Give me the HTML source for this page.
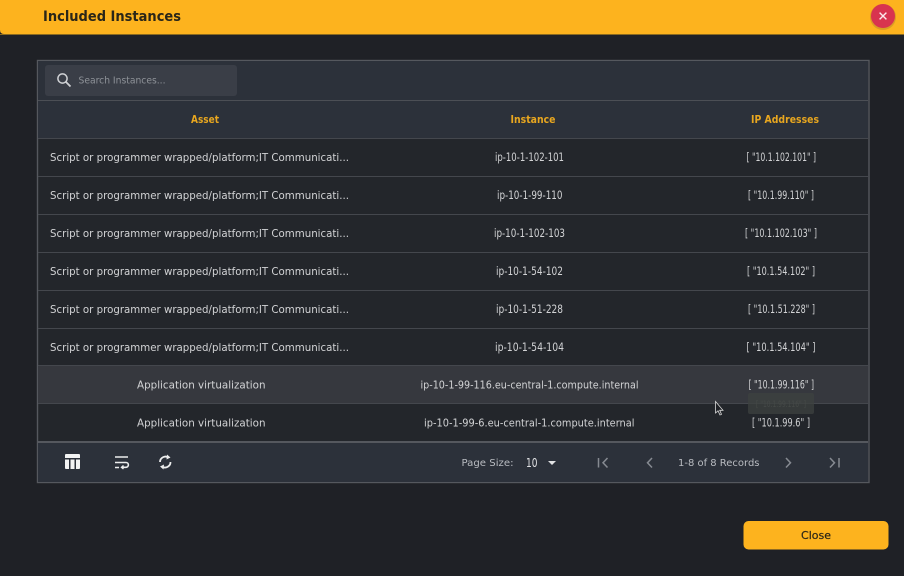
<!DOCTYPE html>
<html><head><meta charset="utf-8"><style>
html,body{margin:0;padding:0;width:904px;height:576px;overflow:hidden;background:#1f2126}
svg{display:block;filter:blur(.35px)}
text{font-family:"DejaVu Sans","Liberation Sans",sans-serif}
.r{font-size:10.5px;fill:#d2d3d5}
.n{font-size:11.5px;fill:#d2d3d5}
.h{font-size:10.5px;font-weight:700;fill:#e9a71f}
.f{font-size:10px;fill:#b9bcc1}
</style></head><body>
<svg width="904" height="576" viewBox="0 0 904 576" xmlns="http://www.w3.org/2000/svg">
<rect width="904" height="576" fill="#1f2126"/>
<path d="M0 0H904V34H4Q0 34 0 30Z" fill="#fdb31e"/>
<rect x="0" y="34" width="904" height="1" fill="#8a6a20"/>
<text x="43" y="21" font-size="14" font-weight="700" fill="#2a2618" textLength="138" lengthAdjust="spacingAndGlyphs">Included Instances</text>
<circle cx="883" cy="17" r="13" fill="#b8882a" opacity=".5"/>
<circle cx="883" cy="16" r="12" fill="#d8344f"/>
<path d="M879.6 12.6L886.4 19.4M886.4 12.6L879.6 19.4" stroke="#fbe9ec" stroke-width="1.4"/>

<rect x="37.5" y="60.5" width="831.500" height="422" fill="#23262b" stroke="#55585e" stroke-width="1.400"/>
<rect x="38" y="61" width="830" height="77" fill="#2c313a"/>
<rect x="45" y="65" width="192" height="31" rx="3" fill="#3a3e47"/>
<circle cx="62.5" cy="78.500" r="4.600" fill="none" stroke="#d0d2d5" stroke-width="1.500"/>
<path d="M66 82L70.500 86.500" stroke="#d0d2d5" stroke-width="1.800"/>
<text x="78.500" y="83.500" font-size="10" fill="#8f9399" textLength="87" lengthAdjust="spacingAndGlyphs">Search Instances...</text>
<rect x="38" y="100" width="830" height="1" fill="#4c4f55"/>
<text class="h" x="191" y="123" textLength="28" lengthAdjust="spacingAndGlyphs">Asset</text>
<text class="h" x="510.500" y="123" textLength="45" lengthAdjust="spacingAndGlyphs">Instance</text>
<text class="h" x="751" y="123" textLength="68" lengthAdjust="spacingAndGlyphs">IP Addresses</text>

<rect x="38" y="366" width="830" height="38" fill="#36383e"/>
<g fill="#44474d">
<rect x="38" y="138" width="830" height="1"/><rect x="38" y="176" width="830" height="1"/>
<rect x="38" y="214" width="830" height="1"/><rect x="38" y="252" width="830" height="1"/>
<rect x="38" y="290" width="830" height="1"/><rect x="38" y="328" width="830" height="1"/>
<rect x="38" y="365" width="830" height="1"/><rect x="38" y="403" width="830" height="1"/>
</g>
<rect x="38" y="441" width="830" height="2" fill="#55585e"/>

<g class="rows">
<text class="r" x="50" y="161" textLength="299" lengthAdjust="spacingAndGlyphs">Script or programmer wrapped/platform;IT Communicati...</text>
<text class="r" x="50" y="199" textLength="299" lengthAdjust="spacingAndGlyphs">Script or programmer wrapped/platform;IT Communicati...</text>
<text class="r" x="50" y="237" textLength="299" lengthAdjust="spacingAndGlyphs">Script or programmer wrapped/platform;IT Communicati...</text>
<text class="r" x="50" y="275" textLength="299" lengthAdjust="spacingAndGlyphs">Script or programmer wrapped/platform;IT Communicati...</text>
<text class="r" x="50" y="313" textLength="299" lengthAdjust="spacingAndGlyphs">Script or programmer wrapped/platform;IT Communicati...</text>
<text class="r" x="50" y="351" textLength="299" lengthAdjust="spacingAndGlyphs">Script or programmer wrapped/platform;IT Communicati...</text>
<text class="r" x="137" y="388.500" textLength="128.500" lengthAdjust="spacingAndGlyphs">Application virtualization</text>
<text class="r" x="137" y="426.500" textLength="128.500" lengthAdjust="spacingAndGlyphs">Application virtualization</text>

<text class="n" x="495" y="161" textLength="69" lengthAdjust="spacingAndGlyphs">ip-10-1-102-101</text>
<text class="n" x="497" y="199" textLength="65.500" lengthAdjust="spacingAndGlyphs">ip-10-1-99-110</text>
<text class="n" x="494" y="237" textLength="71" lengthAdjust="spacingAndGlyphs">ip-10-1-102-103</text>
<text class="n" x="496" y="275" textLength="67" lengthAdjust="spacingAndGlyphs">ip-10-1-54-102</text>
<text class="n" x="496" y="313" textLength="67" lengthAdjust="spacingAndGlyphs">ip-10-1-51-228</text>
<text class="n" x="495" y="351" textLength="69" lengthAdjust="spacingAndGlyphs">ip-10-1-54-104</text>
<text class="r" x="420.500" y="388.500" textLength="218" lengthAdjust="spacingAndGlyphs">ip-10-1-99-116.eu-central-1.compute.internal</text>
<text class="r" x="424" y="426.500" textLength="210.500" lengthAdjust="spacingAndGlyphs">ip-10-1-99-6.eu-central-1.compute.internal</text>

<text class="n" x="746.500" y="161" textLength="69.500" lengthAdjust="spacingAndGlyphs">[ "10.1.102.101" ]</text>
<text class="n" x="748" y="199" textLength="66" lengthAdjust="spacingAndGlyphs">[ "10.1.99.110" ]</text>
<text class="n" x="745" y="237" textLength="72" lengthAdjust="spacingAndGlyphs">[ "10.1.102.103" ]</text>
<text class="n" x="747" y="275" textLength="68" lengthAdjust="spacingAndGlyphs">[ "10.1.54.102" ]</text>
<text class="n" x="748" y="313" textLength="67" lengthAdjust="spacingAndGlyphs">[ "10.1.51.228" ]</text>
<text class="n" x="746.500" y="351" textLength="69" lengthAdjust="spacingAndGlyphs">[ "10.1.54.104" ]</text>
<text class="n" x="748.500" y="388.500" textLength="65.500" lengthAdjust="spacingAndGlyphs">[ "10.1.99.116" ]</text>
<text class="n" x="752" y="426.500" textLength="58" lengthAdjust="spacingAndGlyphs">[ "10.1.99.6" ]</text>
</g>

<rect x="748" y="393" width="66" height="21" rx="2" fill="#3d4240" opacity=".75"/>
<text x="756" y="407" font-size="9" fill="#464a48" textLength="50" lengthAdjust="spacingAndGlyphs">[ "10.1.99.116" ]</text>
<path d="M715.500 401.500V413L718 410.800L720 415L721.500 414.300L719.700 410.300H723Z" fill="#1f2126" stroke="#d8d8d8" stroke-width=".8"/>

<rect x="38" y="443" width="830" height="39" fill="#2c313a"/>
<path d="M65 455a1 1 0 0 1 1-1h13a1 1 0 0 1 1 1v3h-15z" fill="#f3f3f3"/>
<path d="M65 459.500h4v9.500h-3a1 1 0 0 1-1-1zM70.500 459.500h4v9.500h-4zM76 459.500h4v8.500a1 1 0 0 1-1 1h-3z" fill="#f3f3f3"/>
<path d="M115 457H128M115 462.500H126a2.400 2.400 0 0 1 0 4.800H122M115 467.500H119" fill="none" stroke="#eceded" stroke-width="1.600"/>
<path d="M123.500 465.500L121.500 467.300L123.500 469" fill="none" stroke="#eceded" stroke-width="1.400"/>
<path d="M160 462a5.500 5.500 0 0 1 8.500-4.500M170.500 462a5.500 5.500 0 0 1-8.500 4.600" fill="none" stroke="#eceded" stroke-width="1.800"/>
<path d="M167 454.500L170.500 457.500L166.500 459.500ZM163.500 469.500L160 466.500L164 464.500Z" fill="#eceded"/>

<text class="f" x="461.500" y="466" textLength="52" lengthAdjust="spacingAndGlyphs">Page Size:</text>
<text x="526" y="467" font-size="12" fill="#e1e2e4" textLength="11.500" lengthAdjust="spacingAndGlyphs">10</text>
<path d="M548 461H556L552 465Z" fill="#e1e2e4"/>
<path d="M598.500 458V467.500" stroke="#868a91" stroke-width="1.500"/>
<path d="M607.500 458L603 462.800L607.500 467.500" fill="none" stroke="#868a91" stroke-width="1.500"/>
<path d="M652 458L647.500 462.800L652 467.500" fill="none" stroke="#868a91" stroke-width="1.500"/>
<text class="f" x="678" y="466" textLength="81.500" lengthAdjust="spacingAndGlyphs">1-8 of 8 Records</text>
<path d="M786 458L790.500 462.800L786 467.500" fill="none" stroke="#868a91" stroke-width="1.500"/>
<path d="M830 458L834.500 462.800L830 467.500" fill="none" stroke="#868a91" stroke-width="1.500"/>
<path d="M839 458V467.500" stroke="#868a91" stroke-width="1.500"/>

<rect x="743.500" y="521" width="145" height="28.500" rx="5" fill="#fdb31e"/>
<text x="801" y="539" font-size="11" font-weight="400" fill="#2a2618" stroke="#2a2618" stroke-width=".2" textLength="30" lengthAdjust="spacingAndGlyphs">Close</text>
</svg>
</body></html>
